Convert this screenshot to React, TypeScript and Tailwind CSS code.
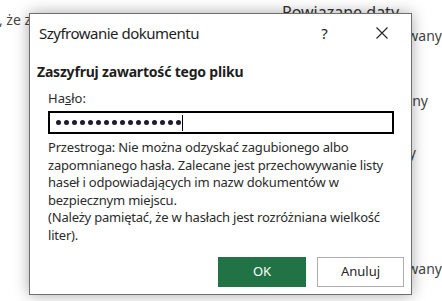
import React from "react";

const dots = Array.from({ length: 16 });

function CloseIcon() {
  return (
    <svg width="12" height="12" viewBox="0 0 12 12" fill="none" stroke="#222" strokeWidth="1.1">
      <path d="M0.5 0.5 L11.5 11.5 M11.5 0.5 L0.5 11.5" />
    </svg>
  );
}

export default function App() {
  return (
    <div className="relative w-[442px] h-[301px] overflow-hidden bg-white font-['Noto_Sans',sans-serif] text-[#2b2b2b]">
      {/* document behind the dialog */}
      <div className="flex">
        <div className="w-[34px] pt-[10px] flex justify-end overflow-hidden whitespace-nowrap text-[14px] leading-[20px] text-[#444]">
          hasło, pamiętaj, że z
        </div>
        <div className="ml-[251px] flex flex-col whitespace-nowrap text-[14px] text-[#444]">
          <div className="pt-[1px] text-[16px] leading-[22px] text-[#333]">Powiązane daty</div>
          <div className="mt-[3px] w-[160px] flex justify-end leading-[20px]">Ostatnio modyfikowany</div>
          <div className="mt-[45px] w-[146px] flex justify-end leading-[20px]">Zapisany</div>
          <div className="mt-[32px] w-[134px] flex justify-end leading-[20px]">Wydrukowany</div>
          <div className="mt-[96px] w-[160px] flex justify-end leading-[20px]">Ostatnio drukowany</div>
        </div>
      </div>

      {/* dialog */}
      <div className="absolute left-[29px] top-[13px] w-[383px] h-[282px] flex flex-col bg-white border border-[#6f6f6f] shadow-[0_0_14px_rgba(0,0,0,0.34)]">
        <div className="h-[38px] flex items-center pl-[9px] text-[15px] text-[#1e1e1e]">
          <span className="tracking-[-0.5px]">Szyfrowanie dokumentu</span>
          <div className="ml-auto mr-[1px] flex">
            <div className="w-[57px] flex justify-center text-[15px]">?</div>
            <div className="w-[57px] flex justify-center items-center">
              <CloseIcon />
            </div>
          </div>
        </div>

        <div className="mt-[10px] pl-[7px] text-[14px] leading-[20px] font-bold text-[#1e1e1e] tracking-[-0.2px]">
          Zaszyfruj zawartość tego pliku
        </div>

        <div className="mt-[7px] pl-[18px] text-[13px] leading-[18px]">
          Ha<span className="underline">s</span>ło:
        </div>

        <div className="mt-[4px] ml-[18px] w-[346px] h-[23px] border-2 border-black flex items-center pl-[6px]">
          <div className="flex gap-[3px]">
            {dots.map((_, i) => (
              <span key={i} className="w-[5px] h-[5px] rounded-full bg-[#1c1c2a]" />
            ))}
          </div>
          <span className="ml-[1px] w-[1px] h-[16px] bg-black" />
        </div>

        <div className="mt-[5px] ml-[18px] text-[13px] leading-[17.5px] tracking-[-0.2px] text-[#2b2b2b] whitespace-nowrap">
          Przestroga: Nie można odzyskać zagubionego albo
          <br />
          zapomnianego hasła. Zalecane jest przechowywanie listy
          <br />
          haseł i odpowiadających im nazw dokumentów w
          <br />
          bezpiecznym miejscu.
          <br />
          (Należy pamiętać, że w hasłach jest rozróżniana wielkość
          <br />
          liter).
        </div>

        <div className="mt-auto mb-[7px] mr-[7px] flex justify-end gap-[11px] text-[13px]">
          <button className="w-[88px] h-[30px] bg-[#217346] text-white">OK</button>
          <button className="w-[87px] h-[30px] bg-white border border-[#adadad] text-[#262626]">Anuluj</button>
        </div>
      </div>
    </div>
  );
}
